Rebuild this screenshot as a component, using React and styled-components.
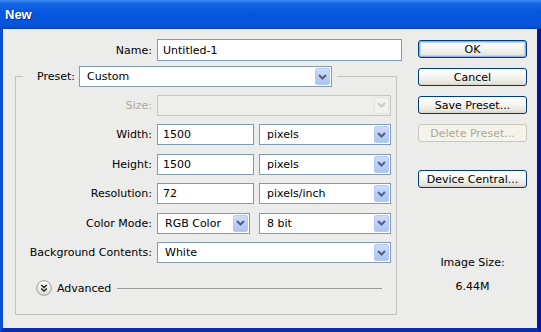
import React from 'react';
import styled, { createGlobalStyle } from 'styled-components';

const GlobalStyle = createGlobalStyle`
  html, body {
    margin: 0;
    padding: 0;
    background: #ffffff;
  }
  body {
    font-family: "DejaVu Sans", Tahoma, sans-serif;
    font-size: 11px;
    color: #000;
  }
`;

const Chevron = ({ disabled }) => (
  <svg width="9" height="6" viewBox="0 0 9 6">
    <polyline
      points="1,1 4.5,4.5 8,1"
      fill="none"
      stroke={disabled ? '#C8CCD2' : '#4D6185'}
      strokeWidth="2"
    />
  </svg>
);

const Select = ({ value, width, disabled }) => (
  <SelectBox $width={width} $disabled={disabled}>
    <SelectText>{value}</SelectText>
    <ArrowButton $disabled={disabled}>
      <Chevron disabled={disabled} />
    </ArrowButton>
  </SelectBox>
);

const AdvancedIcon = () => (
  <svg width="16" height="16" viewBox="0 0 16 16">
    <defs>
      <linearGradient id="advg" x1="0" y1="0" x2="0" y2="1">
        <stop offset="0" stopColor="#ffffff" />
        <stop offset="1" stopColor="#dcdcd6" />
      </linearGradient>
    </defs>
    <circle cx="8" cy="8" r="7.3" fill="url(#advg)" stroke="#9a9a96" strokeWidth="1" />
    <polyline points="5.2,5 8,7.6 10.8,5" fill="none" stroke="#222" strokeWidth="1.4" />
    <polyline points="5.2,8.4 8,11 10.8,8.4" fill="none" stroke="#222" strokeWidth="1.4" />
  </svg>
);

const App = () => {
  return (
    <>
      <GlobalStyle />
      <Window>
        <TitleBar>New</TitleBar>
        <Client>
          <LeftCol>
            <NameRow>
              <Label>Name:</Label>
              <TextBox>Untitled-1</TextBox>
            </NameRow>

            <Group>
              <Legend>
                <LegendInner>
                  <Label>Preset:</Label>
                  <Select value="Custom" width={253} />
                </LegendInner>
              </Legend>

              <Rows>
                <Label $disabled>Size:</Label>
                <Select value="" disabled />

                <Label>Width:</Label>
                <Pair>
                  <TextBox>1500</TextBox>
                  <Select value="pixels" />
                </Pair>

                <Label>Height:</Label>
                <Pair>
                  <TextBox>1500</TextBox>
                  <Select value="pixels" />
                </Pair>

                <Label>Resolution:</Label>
                <Pair>
                  <TextBox>72</TextBox>
                  <Select value="pixels/inch" />
                </Pair>

                <Label>Color Mode:</Label>
                <Pair>
                  <Select value="RGB Color" width={93} />
                  <Select value="8 bit" />
                </Pair>

                <Label>Background Contents:</Label>
                <Select value="White" />
              </Rows>

              <AdvancedRow>
                <AdvancedIcon />
                <span>Advanced</span>
                <Rule />
              </AdvancedRow>
            </Group>
          </LeftCol>

          <RightCol>
            <Button $default>OK</Button>
            <Button>Cancel</Button>
            <Button>Save Preset...</Button>
            <Button $disabled>Delete Preset...</Button>
            <Button $spaced>Device Central...</Button>
            <Info>
              <InfoLine>Image Size:</InfoLine>
              <InfoLine>6.44M</InfoLine>
            </Info>
          </RightCol>
        </Client>
      </Window>
    </>
  );
};

const Window = styled.div`
  width: 541px;
  height: 332px;
  box-sizing: border-box;
  display: flex;
  flex-direction: column;
  border-left: 3px solid #0A4FD6;
  border-right: 4px solid #00169C;
  border-bottom: 4px solid #0A2FA8;
  background: #ECECEA;
`;

const TitleBar = styled.div`
  height: 29px;
  flex: none;
  box-sizing: border-box;
  display: flex;
  align-items: center;
  padding: 0 0 1px 5px;
  margin-left: -3px;
  margin-right: -4px;
  background: linear-gradient(
    #3D8DF6 0%,
    #1467E6 12%,
    #0758DE 40%,
    #0556DD 80%,
    #0A4BCF 94%,
    #0A3FB0 100%
  );
  color: #ffffff;
  font-family: "Liberation Sans", Arial, sans-serif;
  font-weight: bold;
  font-size: 13px;
  text-shadow: 1px 1px 0 #0B2D8E;
`;

const Client = styled.div`
  flex: 1;
  display: flex;
  padding: 10px 0 0 12px;
`;

const LeftCol = styled.div`
  width: 388px;
  display: flex;
  flex-direction: column;
`;

const NameRow = styled.div`
  display: grid;
  grid-template-columns: 137px 245px;
  column-gap: 5px;
  align-items: center;
`;

const Label = styled.span`
  text-align: right;
  white-space: nowrap;
  color: ${({ $disabled }) => ($disabled ? '#ACA899' : '#000')};
`;

const TextBox = styled.div`
  height: 22px;
  box-sizing: border-box;
  display: flex;
  align-items: center;
  padding: 0 5px;
  border: 1px solid #7F9DB9;
  background: #ffffff;
`;

const SelectBox = styled.div`
  height: 21px;
  box-sizing: border-box;
  width: ${({ $width }) => ($width ? `${$width}px` : 'auto')};
  display: flex;
  align-items: stretch;
  padding: 1px 1px 1px 7px;
  border: 1px solid ${({ $disabled }) => ($disabled ? '#C9C7BA' : '#7F9DB9')};
  background: ${({ $disabled }) => ($disabled ? '#EEEEEA' : '#ffffff')};
`;

const SelectText = styled.span`
  flex: 1;
  display: flex;
  align-items: center;
  white-space: nowrap;
`;

const ArrowButton = styled.span`
  width: 15px;
  display: flex;
  align-items: center;
  justify-content: center;
  border-radius: 2px;
  border: 1px solid ${({ $disabled }) => ($disabled ? '#E4E4E0' : '#B5C8F2')};
  box-sizing: border-box;
  background: ${({ $disabled }) =>
    $disabled
      ? '#F2F2EF'
      : 'linear-gradient(#CFDDFC, #B8CCF6 60%, #AFC4F3)'};
`;

const Group = styled.fieldset`
  width: 382px;
  box-sizing: border-box;
  margin: 5px 0 0;
  padding: 7px 5px 18px 0;
  border: 1px solid #C2C2BC;
  min-inline-size: 0;
`;

const Legend = styled.legend`
  margin-left: 7px;
  padding: 0 5px 0 14px;
`;

const LegendInner = styled.div`
  display: flex;
  align-items: center;
  gap: 4px;
`;

const Rows = styled.div`
  display: grid;
  grid-template-columns: 136px 234px;
  column-gap: 5px;
  row-gap: 8.5px;
  align-items: center;
  padding-top: 0.5px;
`;

const Pair = styled.div`
  display: grid;
  grid-template-columns: 97px 132px;
  column-gap: 5px;
  align-items: center;
  ${TextBox} {
    height: 21px;
  }
`;

const AdvancedRow = styled.div`
  display: flex;
  align-items: center;
  gap: 5px;
  margin: 17px 0 0 20px;
`;

const Rule = styled.div`
  flex: 1;
  height: 1px;
  margin: 1px 9px 0 1px;
  background: #9C9C98;
`;

const RightCol = styled.div`
  width: 109px;
  margin-left: 15px;
  display: flex;
  flex-direction: column;
  gap: 10px;
  padding-top: 1px;
`;

const Button = styled.div`
  height: 18px;
  box-sizing: border-box;
  display: flex;
  align-items: center;
  justify-content: center;
  border-radius: 3px;
  white-space: nowrap;
  margin-top: ${({ $spaced }) => ($spaced ? '18px' : '0')};
  border: 1px solid ${({ $disabled }) => ($disabled ? '#CAC8BB' : '#003C74')};
  color: ${({ $disabled }) => ($disabled ? '#ACA899' : '#000')};
  background: ${({ $disabled }) =>
    $disabled ? '#F5F4EA' : 'linear-gradient(#FFFFFF, #F4F4F0 50%, #E6E5DE 85%, #D7D4CA)'};
  box-shadow: ${({ $default }) =>
    $default ? 'inset 0 0 0 1px #8EB0EA, inset 0 0 0 2px #C3D6F6' : 'none'};
`;

const Info = styled.div`
  margin-top: 58px;
  display: flex;
  flex-direction: column;
  align-items: center;
  gap: 11px;
`;

const InfoLine = styled.span`
  line-height: 13px;
`;

export default App;
